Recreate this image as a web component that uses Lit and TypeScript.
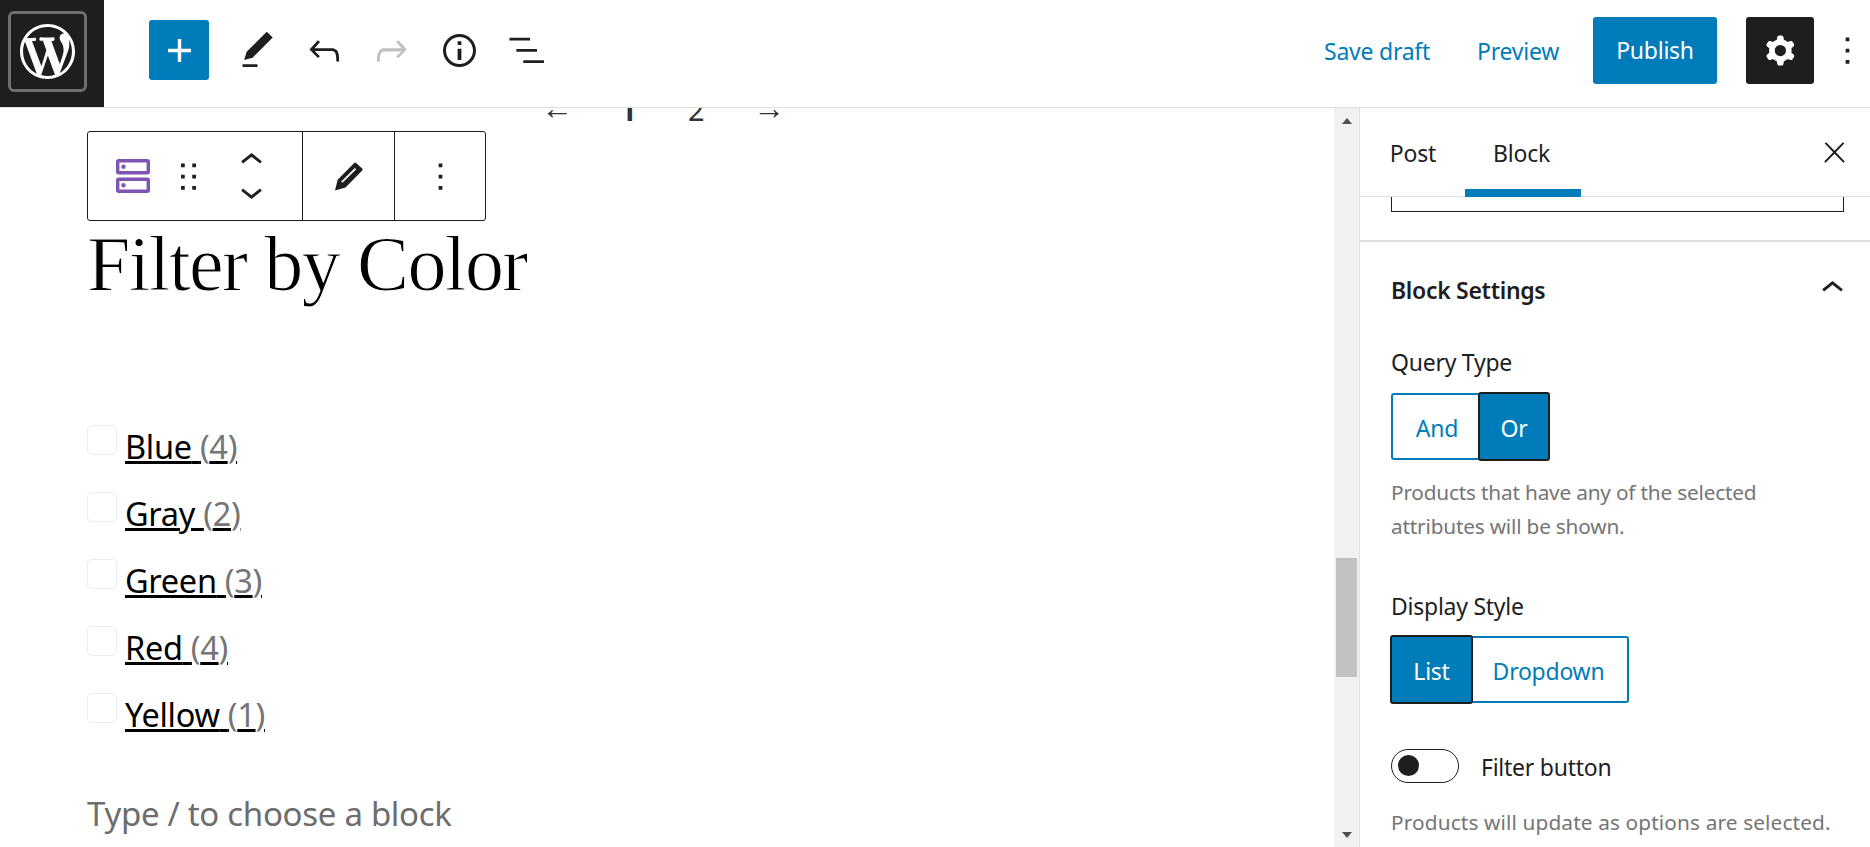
import { LitElement, html, css, svg } from "lit";
import { customElement } from "lit/decorators.js";

const ic = (d: any, cls = "") => html`<svg class="ic ${cls}" viewBox="0 0 24 24" width="45" height="45" fill="currentColor">${d}</svg>`;
const P = {
  pen: svg`<path d="M20.1 5.1L16.9 2 6.2 12.7l-1.3 4.4 4.5-1.3L20.1 5.1zM4 20.8h8v-1.5H4v1.5z"/>`,
  undo: svg`<path d="M18.3 11.7c-.6-.6-1.4-.9-2.3-.9H6.7l2.9-3.3-1.1-1-4.5 5L8.5 16l1-1-2.7-2.7H16c.5 0 .9.2 1.3.5 1 1 1 3.4 1 4.5v.5h1.5v-.5c0-1.5 0-4.3-1.5-5.8z"/>`,
  redo: svg`<path d="M15.6 6.5l-1.1 1 2.9 3.3H8c-.9 0-1.7.3-2.3.9-1.4 1.5-1.4 4.2-1.4 5.8v.5h1.5v-.5c0-1 0-3.5 1-4.5.3-.3.7-.5 1.3-.5h9.2L14.5 15l1.1 1.1 4.6-4.6-4.6-5z"/>`,
  info: svg`<path d="M12 3.2c-4.8 0-8.8 3.9-8.8 8.8 0 4.8 3.9 8.8 8.8 8.8 4.8 0 8.8-3.9 8.8-8.8 0-4.8-4-8.8-8.8-8.8zm0 16c-4 0-7.2-3.3-7.2-7.2C4.8 8 8 4.8 12 4.8s7.2 3.3 7.2 7.2c0 4-3.2 7.2-7.2 7.2zM11 17h2v-6h-2v6zm0-8h2V7h-2v2z"/>`,
  list: svg`<path d="M2.9 5.2h11v1.5h-11zM6.6 11.2h11v1.5h-11zM10.3 17.2h11v1.5h-11z"/>`,
  gear: svg`<path fill-rule="evenodd" clip-rule="evenodd" d="M10.289 4.836A1 1 0 0111.275 4h1.306a1 1 0 01.987.836l.244 1.466c.787.26 1.503.679 2.108 1.218l1.393-.522a1 1 0 011.216.437l.653 1.13a1 1 0 01-.23 1.273l-1.148.944a6.025 6.025 0 010 2.435l1.149.946a1 1 0 01.23 1.272l-.653 1.13a1 1 0 01-1.216.437l-1.394-.522c-.605.54-1.32.958-2.108 1.218l-.244 1.466a1 1 0 01-.987.836h-1.306a1 1 0 01-.986-.836l-.244-1.466a5.995 5.995 0 01-2.108-1.218l-1.394.522a1 1 0 01-1.217-.436l-.653-1.131a1 1 0 01.23-1.272l1.149-.946a6.026 6.026 0 010-2.435l-1.148-.944a1 1 0 01-.23-1.272l.653-1.131a1 1 0 011.217-.437l1.393.522a5.994 5.994 0 012.108-1.218l.244-1.466zM14.929 12a3 3 0 11-6 0 3 3 0 016 0z"/>`,
  more: svg`<path d="M13 19h-2v-2h2v2zm0-6h-2v-2h2v2zm0-6h-2V5h2v2z"/>`,
  close: svg`<path d="M13 11.8l6.1-6.3-1-1-6.1 6.2-6.1-6.2-1 1 6.1 6.3-6.5 6.7 1 1 6.5-6.6 6.5 6.6 1-1z"/>`,
  up: svg`<path d="M6.5 12.4L12 8l5.5 4.4-.9 1.2L12 10l-4.5 3.6-1-1.2z"/>`,
  down: svg`<path d="M17.5 11.6L12 16l-5.5-4.4.9-1.2L12 14l4.5-3.6 1 1.2z"/>`,
  drag: svg`<path d="M8 7h2V5H8v2zm0 6h2v-2H8v2zm0 6h2v-2H8v2zm6-14v2h2V5h-2zm0 8h2v-2h-2v2zm0 6h2v-2h-2v2z"/>`,
  edit: svg`<path fill-rule="evenodd" d="M16.2 4.9l3 2.7c.4.4.4.9 0 1.3L10.4 17.8 4.8 19.4l1.4-5.7 8.7-8.8c.4-.3.9-.3 1.3 0zM15.4 7.4l-7.3 7.2.7.7 7.3-7.2-.7-.7z"/>`,
};

@customElement("app-root")
export class AppRoot extends LitElement {
  static styles = css`
    :host { display: block; width: 100%; height: 847px; overflow: hidden; font-family: "Noto Sans", sans-serif; color: #1e1e1e; background: #fff; }
    * { box-sizing: border-box; }
    .ic { display: block; flex: none; }
    .page { display: flex; flex-direction: column; height: 847px; }

    .top { flex: none; height: 108px; display: flex; align-items: center; border-bottom: 1px solid #e0e0e0; background: #fff; padding-bottom: 7px; }
    .logo { width: 104px; height: 107px; margin-bottom: -7px; background: #1e1e1e; display: flex; align-items: center; padding: 0 0 4px 8px; }
    .logo-ring { width: 79px; height: 81px; border: 3.5px solid #6e6e6e; border-radius: 6px; display: flex; align-items: center; justify-content: center; color: #fff; }
    .tools { display: flex; align-items: center; margin-left: 45px; }
    .add { width: 60px; height: 60px; border-radius: 3px; background: #007cba; display: flex; align-items: center; justify-content: center; color: #fff; margin-right: 26px; }
    .tool { width: 45px; height: 45px; margin-right: 22.2px; }
    .tool.off { color: #c0c0c0; }
    .actions { margin-left: auto; display: flex; align-items: center; }
    .link { color: #007cba; font-size: 23px; letter-spacing: -0.25px; padding-top: 1px; }
    .save { margin-right: 47px; }
    .preview { margin-right: 34px; }
    .publish { width: 124px; height: 67px; border-radius: 3px; background: #007cba; color: #fff; font-size: 23px; letter-spacing: -0.25px; display: flex; align-items: center; justify-content: center; margin-right: 29px; }
    .gear { width: 68px; height: 67px; border-radius: 3px; background: #1e1e1e; color: #fff; display: flex; align-items: center; justify-content: center; margin-right: 11px; }

    .body { flex: 1; min-height: 0; display: flex; }
    .canvas { flex: 1; min-width: 0; overflow: hidden; padding-left: 87px; }
    .pager { display: flex; align-items: baseline; height: 16px; margin: -14px 0 0 454px; font-size: 29px; line-height: 30px; color: #333; white-space: nowrap; }
    .pager span { display: block; }
    .pager .a1 { width: 79px; font-size: 32px; transform: translateY(-2px); }
    .pager .n1 { width: 68px; font-weight: 700; }
    .pager .n2 { width: 65px; }
    .pager .a2 { font-size: 32px; transform: translateY(-2px); }
    .blocktb { margin-top: 21px; width: 399px; height: 90px; border: 1.5px solid #1e1e1e; border-radius: 3px; display: flex; background: #fff; }
    .tb-a { width: 215px; border-right: 1.5px solid #1e1e1e; display: flex; align-items: center; padding-left: 28px; }
    .tb-b { width: 92px; border-right: 1.5px solid #1e1e1e; display: flex; align-items: center; justify-content: center; }
    .tb-c { flex: 1; display: flex; align-items: center; justify-content: center; }
    .bicon { width: 34px; height: 34px; margin-right: 16px; color: #7f54b3; }
    .drag { margin-right: 18px; }
    .updown { display: flex; flex-direction: column; }
    .updown svg { margin: -7px 0; }
    h1 { margin: -2px 0 0; font: 400 78px/90px "Liberation Serif", serif; letter-spacing: -1.6px; color: #000; -webkit-text-stroke: 1px #fff; }
    ul { list-style: none; margin: 116px 0 0; padding: 0; }
    li { display: flex; height: 67px; }
    .check { width: 30px; height: 30px; border: 1px solid #ececec; border-radius: 5px; margin-right: 8px; flex: none; }
    .lab { font-size: 32.5px; line-height: 44px; text-decoration: underline; color: #000; margin-top: 0; letter-spacing: -0.3px; white-space: pre; }
    .count { color: #757575; }
    .hint { margin-top: 32px; font-size: 33px; line-height: 44px; color: #6d6d6d; letter-spacing: -0.3px; }

    .sb { width: 26px; flex: none; background: #f1f1f1; border-right: 1px solid #e0e0e0; display: flex; flex-direction: column; align-items: center; }
    .sb i { display: block; width: 0; height: 0; border-left: 5.5px solid transparent; border-right: 5.5px solid transparent; }
    .sb .u { border-bottom: 6px solid #505050; margin-top: 10px; }
    .sb .d { border-top: 6px solid #505050; margin-top: auto; margin-bottom: 9px; }
    .thumb { width: 21px; height: 119px; background: #c1c1c1; margin-top: 434px; }

    .side { width: 510px; flex: none; display: flex; flex-direction: column; min-height: 0; }
    .tabs { flex: none; height: 89px; border-bottom: 1.5px solid #e0e0e0; display: flex; padding-left: 6px; position: relative; }
    .tab { width: 116px; height: 89px; display: flex; align-items: center; justify-content: center; font-size: 23px; letter-spacing: -0.2px; }
    .tab.post { width: 94px; margin-right: 5px; }
    .tab.on { border-bottom: 8px solid #007cba; padding: 8px 3px 0 0; }
    .x { position: absolute; right: 19px; top: 28px; }
    .x svg { width: 33px; height: 33px; }
    .frag { height: 15px; margin: 0 25px 0 31px; width: 453px; border: 1.5px solid #1e1e1e; border-top: none; }
    .sep { height: 1.5px; background: #e0e0e0; margin-top: 28px; }
    .sect { padding: 0 25px 0 31px; flex: 1; min-height: 0; overflow: hidden; }
    .sect-h { height: 30px; margin-top: 33px; display: flex; align-items: center; justify-content: space-between; font-size: 23px; font-weight: 600; letter-spacing: -0.3px; position: relative; }
    .sect-h svg { position: absolute; right: -10px; top: -9px; }
    .label { font-size: 23px; line-height: 30px; letter-spacing: -0.25px; margin-top: 42px; }
    .label.ds { margin-top: 48px; }
    .seg { display: inline-flex; height: 67px; border: 2px solid #007cba; border-radius: 3px; margin: 16px 0 0 0; vertical-align: top; }
    .seg.s2 { margin-top: 15px; }
    .seg span { display: flex; align-items: center; justify-content: center; color: #007cba; font-size: 23px; letter-spacing: -0.25px; padding-top: 4px; }
    .seg .sel { background: #007cba; color: #fff; outline: 2px solid #1e1e1e; outline-offset: -1px; border-radius: 2px; position: relative; margin: -2px; padding: 6px 2px 2px; }
    .and { width: 88px; }
    .or { width: 70px; }
    .ls { width: 81px; }
    .dd { width: 157px; }
    .help { margin: 15px 0 0; font-size: 20.8px; line-height: 34px; color: #757575; letter-spacing: -0.2px; width: 420px; }
    .row { display: flex; align-items: center; margin: 46px 0 0 0; }
    .toggle { width: 68px; height: 34px; border: 1.5px solid #1e1e1e; border-radius: 17px; display: flex; align-items: center; padding-left: 6px; margin-right: 22px; }
    .toggle b { display: block; width: 21px; height: 21px; border-radius: 50%; background: #1e1e1e; }
    .rl { font-size: 23px; letter-spacing: -0.25px; padding-top: 2px; }
    .help.last { margin-top: 22px; width: 475px; white-space: nowrap; letter-spacing: 0.13px; }
  `;

  render() {
    const items: [string, number][] = [["Blue", 4], ["Gray", 2], ["Green", 3], ["Red", 4], ["Yellow", 1]];
    return html`<div class="page">
      <header class="top">
        <div class="logo"><div class="logo-ring">
          <svg viewBox="0 0 20 20" width="55" height="55" fill="currentColor"><path d="M20 10c0-5.51-4.49-10-10-10C4.48 0 0 4.49 0 10c0 5.52 4.48 10 10 10 5.51 0 10-4.48 10-10zM7.78 15.37L4.37 6.22c.55-.02 1.17-.08 1.17-.08.5-.06.44-1.13-.06-1.11 0 0-1.45.11-2.37.11-.18 0-.37 0-.58-.01C4.12 2.69 6.87 1.11 10 1.11c2.33 0 4.45.87 6.05 2.34-.68-.11-1.65.39-1.65 1.58 0 .74.45 1.36.9 2.1.35.61.55 1.36.55 2.46 0 1.49-1.4 5-1.4 5l-3.03-8.37c.54-.02.82-.17.82-.17.5-.05.44-1.25-.06-1.22 0 0-1.44.12-2.38.12-.87 0-2.33-.12-2.33-.12-.5-.03-.56 1.2-.06 1.22l.92.08 1.26 3.41zM17.41 10c.24-.64.74-1.87.43-4.25.7 1.29 1.05 2.71 1.05 4.25 0 3.29-1.73 6.24-4.4 7.78.97-2.59 1.94-5.2 2.92-7.78zM6.1 18.09C3.12 16.65 1.11 13.53 1.11 10c0-1.3.23-2.48.72-3.59C3.25 10.3 4.67 14.2 6.1 18.09zm4.03-6.63l2.58 6.98c-.86.29-1.76.45-2.71.45-.79 0-1.57-.11-2.29-.33.81-2.38 1.62-4.74 2.42-7.1z"/></svg>
        </div></div>
        <div class="tools">
          <div class="add"><svg viewBox="0 0 24 24" width="23" height="23" fill="currentColor"><path d="M10.2 0h3.6v10.2H24v3.6H13.8V24h-3.6V13.8H0v-3.6h10.2z"/></svg></div>
          <div class="tool">${ic(P.pen)}</div>
          <div class="tool">${ic(P.undo)}</div>
          <div class="tool off">${ic(P.redo)}</div>
          <div class="tool">${ic(P.info)}</div>
          <div class="tool">${ic(P.list)}</div>
        </div>
        <div class="actions">
          <span class="link save">Save draft</span>
          <span class="link preview">Preview</span>
          <div class="publish">Publish</div>
          <div class="gear">${ic(P.gear)}</div>
          <div class="more">${ic(P.more)}</div>
        </div>
      </header>
      <div class="body">
        <main class="canvas">
          <div class="pager"><span class="a1">←</span><span class="n1">1</span><span class="n2">2</span><span class="a2">→</span></div>
          <div class="blocktb">
            <div class="tb-a">
              <svg class="bicon" viewBox="0 0 34 34" fill="none" stroke="currentColor" stroke-width="3.4"><rect x="1.7" y="1.7" width="30.6" height="12" rx="1"/><rect x="1.7" y="20.3" width="30.6" height="12" rx="1"/><circle cx="7.5" cy="7.7" r="2.2" fill="currentColor" stroke="none"/><circle cx="7.5" cy="26.3" r="2.2" fill="currentColor" stroke="none"/></svg>
              <span class="drag">${ic(P.drag)}</span>
              <div class="updown">${ic(P.up)}${ic(P.down)}</div>
            </div>
            <div class="tb-b">${ic(P.edit)}</div>
            <div class="tb-c">${ic(P.more)}</div>
          </div>
          <h1>Filter by Color</h1>
          <ul>
            ${items.map(([n, c]) => html`<li><span class="check"></span><span class="lab">${n} <span class="count">(${c})</span></span></li>`)}
          </ul>
          <div class="hint">Type / to choose a block</div>
        </main>
        <div class="sb"><i class="u"></i><div class="thumb"></div><i class="d"></i></div>
        <aside class="side">
          <div class="tabs">
            <div class="tab post">Post</div>
            <div class="tab on">Block</div>
            <span class="x">${ic(P.close)}</span>
          </div>
          <div class="frag"></div>
          <div class="sep"></div>
          <div class="sect">
            <div class="sect-h">Block Settings ${ic(P.up)}</div>
            <div class="label">Query Type</div>
            <div class="seg"><span class="and">And</span><span class="or sel">Or</span></div>
            <p class="help">Products that have any of the selected attributes will be shown.</p>
            <div class="label ds">Display Style</div>
            <div class="seg s2"><span class="ls sel">List</span><span class="dd">Dropdown</span></div>
            <div class="row"><span class="toggle"><b></b></span><span class="rl">Filter button</span></div>
            <p class="help last">Products will update as options are selected.</p>
          </div>
        </aside>
      </div>
    </div>`;
  }
}
